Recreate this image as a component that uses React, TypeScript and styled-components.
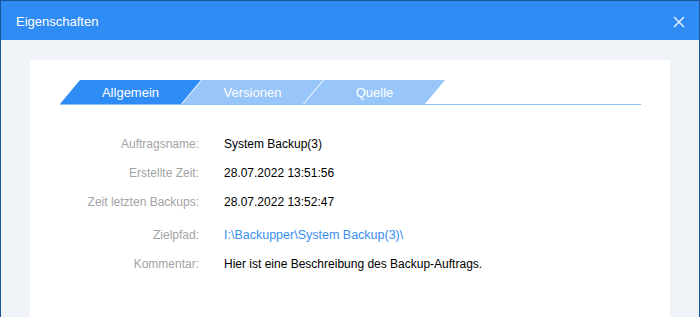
import React from "react";
import styled, { createGlobalStyle } from "styled-components";

const GlobalStyle = createGlobalStyle`
  html, body {
    margin: 0;
    padding: 0;
    background: #ffffff;
  }
  body {
    font-family: "Liberation Sans", Arial, sans-serif;
  }
`;

const Window = styled.div`
  width: 700px;
  height: 317px;
  box-sizing: border-box;
  border: 1px solid #1b5499;
  border-bottom: none;
  display: flex;
  flex-direction: column;
  overflow: hidden;
  background: #f0f4f9;
`;

const TitleBar = styled.div`
  height: 39px;
  flex-shrink: 0;
  background: #2f8cf5;
  display: flex;
  align-items: center;
  justify-content: space-between;
  padding: 0 13px 0 15px;
  color: #ffffff;
`;

const Title = styled.span`
  font-size: 13px;
  padding-top: 1px;
`;

const CloseButton = styled.button`
  border: none;
  background: transparent;
  padding: 0;
  width: 14px;
  height: 14px;
  display: flex;
  align-items: center;
  justify-content: center;
  cursor: pointer;
  margin-top: 2px;
`;

const Body = styled.div`
  flex: 1;
  padding: 20px 29px 0;
  display: flex;
`;

const Card = styled.div`
  flex: 1;
  background: #ffffff;
  padding: 20px 29px 0 30px;
`;

const TabBar = styled.div`
  display: flex;
  border-bottom: 1px solid #8fc2f8;
`;

const Tab = styled.div<{ $active?: boolean }>`
  width: 141px;
  height: 24px;
  flex-shrink: 0;
  display: flex;
  align-items: center;
  justify-content: center;
  font-size: 13px;
  color: #ffffff;
  background: ${(p) => (p.$active ? "#2f8cf5" : "#99c6fa")};
  clip-path: polygon(20px 0, 100% 0, calc(100% - 20px) 100%, 0 100%);
  cursor: pointer;

  & + & {
    margin-left: -19px;
  }
`;

const InfoList = styled.div`
  margin-top: 24px;
  display: flex;
  flex-direction: column;
`;

const InfoRow = styled.div<{ $spaced?: boolean }>`
  display: grid;
  grid-template-columns: 139px 1fr;
  column-gap: 25px;
  align-items: center;
  height: 29px;
  margin-top: ${(p) => (p.$spaced ? "4px" : "0")};
  font-size: 12px;
`;

const Label = styled.span`
  text-align: right;
  color: #a3a3a3;
`;

const Value = styled.span`
  color: #000000;
`;

const PathLink = styled.a`
  color: #3a8ef2;
  text-decoration: none;
  font-size: 12.5px;
`;

const details = [
  { label: "Auftragsname:", value: "System Backup(3)" },
  { label: "Erstellte Zeit:", value: "28.07.2022 13:51:56" },
  { label: "Zeit letzten Backups:", value: "28.07.2022 13:52:47" },
];

const App: React.FC = () => {
  return (
    <>
      <GlobalStyle />
      <Window>
        <TitleBar>
          <Title>Eigenschaften</Title>
          <CloseButton aria-label="Schließen">
            <svg width="12" height="12" viewBox="0 0 12 12">
              <path
                d="M1 1 L11 11 M11 1 L1 11"
                stroke="#dcebff"
                strokeWidth="1.6"
                fill="none"
              />
            </svg>
          </CloseButton>
        </TitleBar>
        <Body>
          <Card>
            <TabBar>
              <Tab $active>Allgemein</Tab>
              <Tab>Versionen</Tab>
              <Tab>Quelle</Tab>
            </TabBar>
            <InfoList>
              {details.map((d) => (
                <InfoRow key={d.label}>
                  <Label>{d.label}</Label>
                  <Value>{d.value}</Value>
                </InfoRow>
              ))}
              <InfoRow $spaced>
                <Label>Zielpfad:</Label>
                <PathLink href="#">I:\Backupper\System Backup(3)\</PathLink>
              </InfoRow>
              <InfoRow>
                <Label>Kommentar:</Label>
                <Value>Hier ist eine Beschreibung des Backup-Auftrags.</Value>
              </InfoRow>
            </InfoList>
          </Card>
        </Body>
      </Window>
    </>
  );
};

export default App;
